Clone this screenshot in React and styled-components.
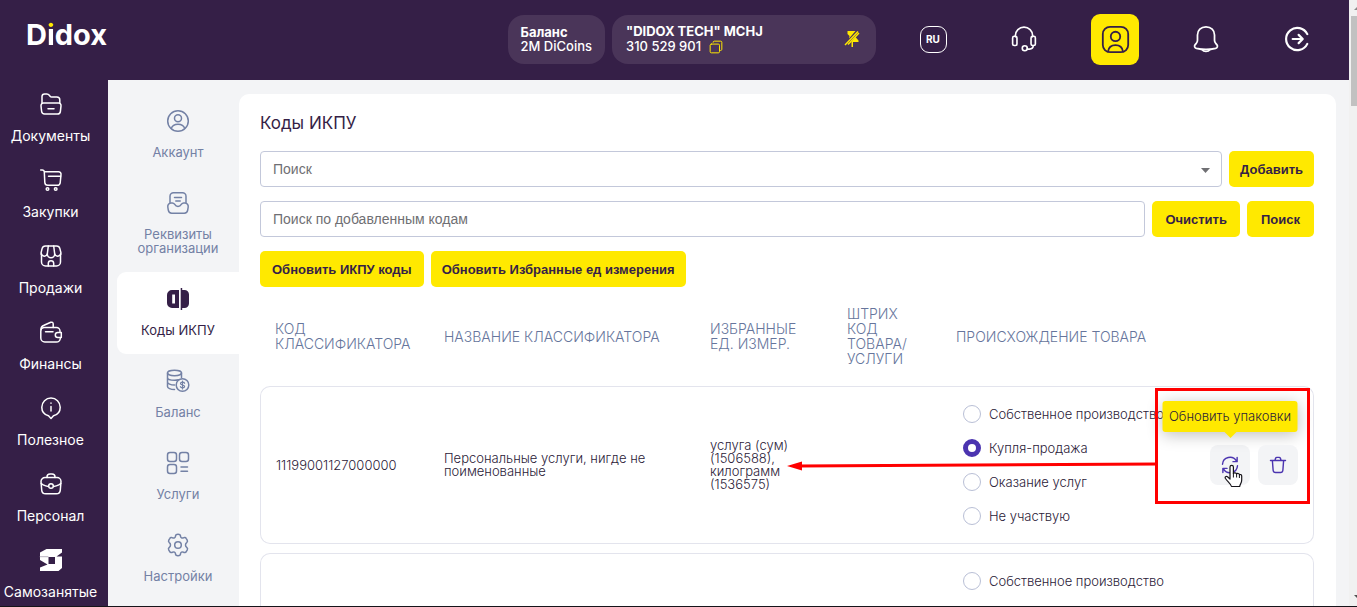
import { useState } from "react";
import styled, { createGlobalStyle, css } from "styled-components";

const GlobalStyle = createGlobalStyle`
  * {
    box-sizing: border-box;
  }
  body {
    margin: 0;
    font-family: Inter, "Liberation Sans", sans-serif;
    color: #351f47;
    overflow: hidden;
  }
  button, input, select {
    font-family: inherit;
  }
`;

const Screen = styled.div`
  height: 100vh;
  display: flex;
  flex-direction: column;
`;

const Viewport = styled.div`
  flex: 1;
  min-height: 0;
  display: flex;
`;

const BottomEdge = styled.div`
  height: 1px;
  flex-shrink: 0;
  background-color: #16141a;
`;

const Page = styled.div`
  flex: 1;
  min-width: 0;
  display: flex;
  flex-direction: column;
  background-color: #f3f4f6;
`;

const Scrollbar = styled.div`
  width: 8px;
  flex-shrink: 0;
  display: flex;
  flex-direction: column;
  align-items: flex-end;
  background-color: #f1f1f1;
  overflow: hidden;
`;

const ScrollArrow = styled.svg`
  width: 3px;
  height: 16px;
  flex-shrink: 0;
`;

const Thumb = styled.div`
  width: 6px;
  height: 90px;
  margin-bottom: auto;
  background-color: #c1c1c1;
`;

const Header = styled.header`
  height: 80px;
  flex-shrink: 0;
  display: flex;
  align-items: center;
  padding: 0 28px 2px 26px;
  background-color: #351f47;
  color: white;
`;

const Logo = styled.a`
  margin: 0 auto 8px 0;
  font-size: 29px;
  line-height: 30px;
  font-weight: 700;
  color: white;
  text-decoration: none;
`;

const LogoDot = styled.span`
  background: linear-gradient(#ffe900 32%, white 32%);
  background-clip: text;
  color: transparent;
`;

const HeaderCard = styled.div`
  height: 49px;
  display: flex;
  align-items: center;
  justify-content: space-between;
  padding: 0 13px;
  margin-right: 7px;
  border-radius: 16px;
  background-color: #4a3559;
  font-size: 13px;
  line-height: 14px;
  ${(p) => p.$wide && css`
    width: 264px;
    margin-right: 33px;
    padding: 0 16px 0 14px;
    line-height: 15px;
  `}
`;

const CardNumber = styled.div`
  display: flex;
  align-items: center;
  gap: 8px;
  font-weight: 500;
`;

const PlainButton = styled.button`
  display: flex;
  padding: 0;
  border: none;
  background: none;
  color: #ffe900;
  cursor: pointer;
`;

const HeaderActions = styled.div`
  display: flex;
  gap: 43px;
`;

const HeaderButton = styled.button`
  width: 48px;
  height: 51px;
  display: flex;
  align-items: center;
  justify-content: center;
  padding: 0;
  border: none;
  border-radius: 9px;
  background-color: ${(p) => (p.$active ? "#ffe900" : "transparent")};
  color: ${(p) => (p.$active ? "#351f47" : "white")};
  cursor: pointer;
`;

const Lang = styled.span`
  width: 27px;
  height: 27px;
  display: flex;
  align-items: center;
  justify-content: center;
  border: 1px solid white;
  border-radius: 9px;
  font-size: 10px;
  font-weight: 700;
`;

const Body = styled.div`
  flex: 1;
  min-height: 0;
  display: flex;
  overflow: hidden;
`;

const Sidebar = styled.nav`
  width: 108px;
  flex-shrink: 0;
  background-color: #351f47;
`;

const SideLink = styled.a`
  height: 76px;
  display: flex;
  flex-direction: column;
  align-items: center;
  gap: 11px;
  padding: 12px 7px 0 0;
  font-size: 14px;
  line-height: 18px;
  color: white;
  text-decoration: none;
`;

const SubNav = styled.nav`
  width: 131px;
  flex-shrink: 0;
  padding: 14px 0 0 9px;
`;

const SubLink = styled.a`
  display: flex;
  flex-direction: column;
  align-items: center;
  gap: 12px;
  padding: 15px 0 17px;
  border-radius: 9px 0 0 9px;
  font-size: 13px;
  line-height: 14px;
  text-align: center;
  text-decoration: none;
  color: ${(p) => (p.$active ? "#351f47" : "#7381a5")};
  background-color: ${(p) => (p.$active ? "white" : "transparent")};
`;

const Main = styled.main`
  flex: 1;
  min-width: 0;
  margin: 14px 13px 0 0;
  padding: 17px 22px 0 21px;
  border-radius: 10px 10px 0 0;
  background-color: white;
`;

const Title = styled.h1`
  margin: 0 0 16px;
  font-size: 17px;
  line-height: 24px;
  font-weight: 400;
`;

const Toolbar = styled.div`
  display: flex;
  gap: 7px;
  margin-bottom: ${(p) => (p.$last ? "0" : "14px")};
`;

const field = css`
  width: 100%;
  height: 36px;
  padding: 0 12px;
  border: 1px solid #c3c8da;
  border-radius: 4px;
  background-color: white;
  font-family: "Liberation Sans", Arial, sans-serif;
  font-size: 14px;
  color: #6f6f73;
  outline: none;
`;

const SelectBox = styled.div`
  position: relative;
  flex: 1;
`;

const Select = styled.select`
  ${field}
  appearance: none;
`;

const Caret = styled.svg`
  position: absolute;
  right: 12px;
  top: 17px;
  width: 9px;
  height: 5px;
  pointer-events: none;
`;

const Input = styled.input`
  ${field}
  flex: 1;
  min-width: 0;
  &::placeholder {
    color: #6f6f73;
    opacity: 1;
  }
`;

const Button = styled.button`
  height: 36px;
  padding: 0 ${(p) => p.$pad || 12}px;
  border: none;
  border-radius: 5px;
  background-color: #ffe900;
  font-family: "Liberation Sans", Arial, sans-serif;
  font-size: 13px;
  font-weight: 700;
  color: #351f47;
  white-space: nowrap;
  cursor: pointer;
`;

const Table = styled.table`
  width: 100%;
  table-layout: fixed;
  border-collapse: separate;
  border-spacing: 0 9px;
`;

const Col = styled.col`
  width: ${(p) => p.$w};
`;

const Th = styled.th`
  padding: 10px 15px 11px;
  font-size: 14px;
  line-height: 15px;
  font-weight: 300;
  text-align: left;
  text-transform: uppercase;
  color: #66759c;
`;

const Td = styled.td`
  position: relative;
  padding: 10px 15px;
  border: solid #e3e4ed;
  border-width: 1px 0;
  font-size: 13px;
  line-height: 13px;
  font-weight: 300;
  color: #2b2138;
  &:first-child {
    border-left-width: 1px;
    border-radius: 10px 0 0 10px;
  }
  &:last-child {
    border-right-width: 1px;
    border-radius: 0 10px 10px 0;
  }
`;

const Options = styled.div`
  display: flex;
  flex-direction: column;
  padding-left: 7px;
`;

const Option = styled.label`
  height: 34px;
  display: flex;
  align-items: center;
  gap: 8px;
  white-space: nowrap;
`;

const Radio = styled.input`
  appearance: none;
  width: 18px;
  height: 18px;
  margin: 0;
  flex-shrink: 0;
  border: 1px solid #b9bfd6;
  border-radius: 50%;
  background-color: white;
  &:checked {
    border: 5px solid #4b34b0;
  }
`;

const RowActions = styled.div`
  display: flex;
  justify-content: flex-end;
  gap: 8px;
`;

const IconButton = styled.button`
  position: relative;
  width: 40px;
  height: 40px;
  display: flex;
  align-items: center;
  justify-content: center;
  padding: 0;
  border: none;
  border-radius: 8px;
  background-color: #f3f4f6;
  color: #4b34b0;
  cursor: pointer;
`;

const Tooltip = styled.span`
  position: absolute;
  left: 50%;
  bottom: 53px;
  transform: translateX(-50%);
  width: 135px;
  padding: 8px 0 9px;
  border-radius: 3px;
  background-color: #ffe900;
  box-shadow: 0 3px 16px rgba(0, 0, 0, 0.25);
  font-size: 13px;
  line-height: 14px;
  font-weight: 300;
  text-align: center;
  white-space: nowrap;
  color: #2b2138;
  &::after {
    content: "";
    position: absolute;
    left: 50%;
    top: 100%;
    transform: translateX(-50%);
    border: 6px solid transparent;
    border-top-color: #ffe900;
    border-bottom: none;
  }
`;

const Hand = styled.svg`
  position: absolute;
  left: 14px;
  top: 19px;
  width: 19px;
  height: 24px;
  z-index: 1;
`;

const Highlight = styled.div`
  position: absolute;
  right: 3px;
  top: 1px;
  width: 155px;
  height: 116px;
  border: 3px solid #ff0000;
  pointer-events: none;
`;

const Arrow = styled.svg`
  position: absolute;
  right: 155px;
  top: 70px;
  width: 371px;
  height: 14px;
  pointer-events: none;
`;

const Icon = ({ size = 24, width = 1.5, children }) => (
  <svg
    width={size}
    height={size}
    viewBox="0 0 24 24"
    fill="none"
    stroke="currentColor"
    strokeWidth={width}
    strokeLinecap="round"
    strokeLinejoin="round"
    aria-hidden="true"
  >
    {children}
  </svg>
);

const sideItems = [
  {
    label: "Документы",
    icon: (
      <>
        <path d="M3 11V4.6A2.6 2.6 0 0 1 5.6 2h2.2c1.1 0 1.9.4 2.5 1.2l1 1.3c.3.4.7.5 1.2.5h5.3a3 3 0 0 1 3 3v3" />
        <path d="M5 11h14.500a2.500 2.500 0 0 1 2.500 2.800l-.6 5.500A3 3 0 0 1 18.400 22H5.600a3 3 0 0 1-3-2.700L2 13.800A2.600 2.600 0 0 1 4.500 11z" />
        <path d="M9 16.700h6" />
      </>
    ),
  },
  {
    label: "Закупки",
    icon: (
      <>
        <path d="M1.700 2h1.500c1.300 0 2 .8 2.100 2l.5 10.500A3 3 0 0 0 8.800 17.300h9.400a3 3 0 0 0 3-2.500l.8-8.200A2.500 2.500 0 0 0 19.500 3.700H5.200" />
        <path d="M9.500 8.200H21.500" />
        <circle cx="8.500" cy="21" r="1.300" />
        <circle cx="16.700" cy="21" r="1.300" />
      </>
    ),
  },
  {
    label: "Продажи",
    icon: (
      <>
        <path d="M2.500 10V18a4 4 0 0 0 4 4h11a4 4 0 0 0 4-4v-8" />
        <path d="M6.500 2h11a3.500 3.500 0 0 1 3.400 2.600l1 4a3.200 3.200 0 0 1-6.200 1.400 3.700 3.700 0 0 1-7.400 0 3.200 3.200 0 0 1-6.200-1.400l1-4A3.500 3.500 0 0 1 6.500 2z" />
        <path d="M8.300 10L9.300 2M15.700 10l-1-8M9.300 22v-2.500a2.700 2.700 0 0 1 5.400 0V22" />
      </>
    ),
  },
  {
    label: "Финансы",
    icon: (
      <>
        <path d="M21 11.500V11a3.500 3.500 0 0 0-3.500-3.500H5A3.500 3.500 0 0 0 1.800 11v7A4 4 0 0 0 5.800 22h11.500a4 4 0 0 0 4-3.500" />
        <path d="M2 9.500c0-2 .8-3.300 2.500-4l7.300-3.200a1.700 1.700 0 0 1 2.400 1.600v3.500" />
        <path d="M22.300 12.500v5h-3.500a2.500 2.500 0 0 1 0-5zM6.500 11.800h7.500" />
      </>
    ),
  },
  {
    label: "Полезное",
    icon: (
      <>
        <path d="M12 22.500l-2.500-2.700C5.300 18.600 2.800 15.500 2.800 11.200a9.200 9.200 0 0 1 18.400 0c0 4.300-2.500 7.400-6.700 8.600z" />
        <path d="M12 10.500v4.500M12 7v.3" />
      </>
    ),
  },
  {
    label: "Персонал",
    icon: (
      <>
        <path d="M8 5.500V5a3 3 0 0 1 3-3h2a3 3 0 0 1 3 3v.5" />
        <path d="M6 5.500h12a4 4 0 0 1 4 4l-.7 8.500a4 4 0 0 1-4 3.800H6.700a4 4 0 0 1-4-3.800L2 9.500a4 4 0 0 1 4-4z" />
        <path d="M2.200 11.500l2 1.400c1.600.9 3.400 1.400 5.200 1.500M21.800 11.500l-2 1.400c-1.600.9-3.400 1.400-5.200 1.500" />
        <circle cx="12" cy="14" r="2.300" />
      </>
    ),
  },
  {
    label: "Самозанятые",
    icon: (
      <>
        <path
          fillRule="evenodd"
          d="M7.500 1H23v3.500l-5.500 4H23V20l-3.500 3H1v-3.500l7.500-3L1 12V4.500zM9.500 9v7H16V9z"
          fill="currentColor"
          stroke="none"
        />
        <path d="M1 8.700h8" stroke="#9a8fa3" strokeWidth="0.700" />
      </>
    ),
  },
];

const subItems = [
  {
    label: "Аккаунт",
    icon: (
      <>
        <circle cx="12" cy="12" r="10.300" />
        <circle cx="12" cy="9.300" r="3.500" />
        <path d="M5.300 19.500c.8-2.600 3.400-4.200 6.700-4.200s5.900 1.600 6.700 4.200" />
      </>
    ),
  },
  {
    label: "Реквизиты организации",
    icon: (
      <>
        <path d="M4 11.500V5.300A3.500 3.500 0 0 1 7.500 1.800h9A3.500 3.500 0 0 1 20 5.300v6.200M8.500 6.500h7M9.800 10h4.400" />
        <path d="M5 12h1.300c1 0 1.700.4 2.200 1.200.8 1.300 2 2.300 3.500 2.300s2.700-1 3.500-2.300c.5-.8 1.200-1.200 2.200-1.200H19a3.500 3.500 0 0 1 3.200 4l-.5 3.200a3.500 3.500 0 0 1-3.500 3H5.800a3.500 3.500 0 0 1-3.500-3L1.800 16A3.500 3.500 0 0 1 5 12z" />
      </>
    ),
  },
  {
    label: "Коды ИКПУ",
    active: true,
    icon: (
      <g stroke="none" fill="currentColor">
        <path
          fillRule="evenodd"
          d="M6 3h7v18H6a5 5 0 0 1-5-5V8a5 5 0 0 1 5-5zm.2 4.500v9H9v-9z"
        />
        <path d="M14.700 1h1.500v2h2.300A4.500 4.500 0 0 1 23 7.500v9a4.500 4.500 0 0 1-4.500 4.500H16.200v2h-1.500z" />
      </g>
    ),
  },
  {
    label: "Баланс",
    icon: (
      <>
        <ellipse cx="8.500" cy="4" rx="7" ry="2.700" />
        <path d="M1.500 4v13.500c0 1.600 3 3 7 3M15.500 4v4.500M1.500 8.500c0 1.600 3.100 2.800 7 2.800 1.500 0 2.800-.2 4-.5M1.500 13c0 1.600 3 3 7 3" />
        <circle cx="16.500" cy="16" r="6.300" />
        <path d="M18.600 14.300c-.3-.8-1-1.100-2.100-1.100-1.200 0-2 .5-2 1.400 0 2 4.100.8 4.100 2.900 0 .9-.8 1.400-2.100 1.400-1.100 0-1.900-.4-2.100-1.200M16.500 12v8" strokeWidth="1.200" />
      </>
    ),
  },
  {
    label: "Услуги",
    icon: (
      <>
        <rect x="1.500" y="1.500" width="9" height="9" rx="2.500" />
        <rect x="13.500" y="1.500" width="9" height="9" rx="2.500" />
        <rect x="1.500" y="13.500" width="9" height="9" rx="2.500" />
        <path d="M15 16h6.500M15 20.300h6.500" />
      </>
    ),
  },
  {
    label: "Настройки",
    icon: (
      <>
        <path d="M9.500 3.200a2.500 2 0 0 1 5 0c.1 1.500 1.600 2.300 2.900 1.600a2 2 0 0 1 2.900.8l.9 1.500a2 2 0 0 1-.5 2.500 3 3 0 0 0 0 4.800 2 2 0 0 1 .6 2.500l-.9 1.500a2 2 0 0 1-3 .8c-1.300-.7-2.800.1-2.900 1.600a2.500 2 0 0 1-5 0c-.1-1.500-1.600-2.300-2.900-1.600a2 2 0 0 1-3-.8l-.9-1.500a2 2 0 0 1 .6-2.500 3 3 0 0 0 0-4.800 2 2 0 0 1-.5-2.500l.9-1.500a2 2 0 0 1 2.900-.8c1.300.7 2.800-.1 2.900-1.600z" />
        <circle cx="12" cy="12" r="3.300" />
      </>
    ),
  },
];

const origins = [
  "Собственное производство",
  "Купля-продажа",
  "Оказание услуг",
  "Не участвую",
];

const columns = [
  { title: "Код классификатора", width: "169px" },
  { title: "Название классификатора", width: "auto" },
  { title: "Избранные ед. измер.", width: "137px" },
  { title: "Штрих код товара/ услуги", width: "109px" },
  { title: "Происхождение товара", width: "232px" },
  { title: "", width: "141px" },
];

const products = [
  {
    id: 1,
    code: "11199001127000000",
    name: "Персональные услуги, нигде не поименованные",
    units: "услуга (сум) (1506588), килограмм (1536575)",
    origin: "Купля-продажа",
    hovered: true,
  },
  { id: 2, code: "", name: "", units: "", origin: "" },
];

const ProductRow = ({ product }) => {
  const [origin, setOrigin] = useState(product.origin);

  return (
    <tr>
      <Td>{product.code}</Td>
      <Td>{product.name}</Td>
      <Td>{product.units}</Td>
      <Td />
      <Td>
        <Options>
          {origins.map((item) => (
            <Option key={item}>
              <Radio
                type="radio"
                name={`origin-${product.id}`}
                checked={origin === item}
                onChange={() => setOrigin(item)}
              />
              {item}
            </Option>
          ))}
        </Options>
      </Td>
      <Td>
        <RowActions>
          <IconButton aria-label="Обновить упаковки">
            <Icon size={18} width={1.9}>
              <path d="M2 11a10 10 0 0 1 18.500-4.500M21.500 2v5.500H16M22 13a10 10 0 0 1-18.500 4.500M2.500 22v-5.500H8" />
            </Icon>
            {product.hovered && (
              <>
                <Tooltip role="tooltip">Обновить упаковки</Tooltip>
                <Hand viewBox="0 0 19 24">
                  <path
                    d="M6 15V3a1.700 1.700 0 0 1 3.400 0v6.500c.3-1 3-1 3.200.5.500-.9 2.700-.7 2.800.8.700-.6 2.300-.3 2.300 1.200v4c0 3-1.700 4-2 6.500H7.500C7 20 3.500 17.500 1.500 14.500c-1-1.600.7-2.800 2-1.700z"
                    fill="white"
                    stroke="#16141a"
                    strokeWidth="1.200"
                    strokeLinejoin="round"
                  />
                  <path d="M9.400 9v4.500M12.600 10v3.500M15.400 11v3" stroke="#16141a" fill="none" />
                </Hand>
              </>
            )}
          </IconButton>
          <IconButton aria-label="Удалить">
            <Icon size={18} width={1.9}>
              <path d="M2 6h20M8 5.500l.8-2.500c.3-.8.900-1.200 1.700-1.200h3c.8 0 1.400.4 1.700 1.200l.8 2.500M4.500 6l1 13c.2 2 1.300 3 3.200 3h6.600c1.900 0 3-1 3.200-3l1-13" />
            </Icon>
          </IconButton>
        </RowActions>
        {product.hovered && (
          <>
            <Highlight />
            <Arrow viewBox="0 0 371 14">
              <path d="M12 9L371 7" stroke="#ff0000" strokeWidth="3" />
              <path d="M0 9L15 4.500v9z" fill="#ff0000" />
            </Arrow>
          </>
        )}
      </Td>
    </tr>
  );
};

const App = () => {
  return (
    <Screen>
      <GlobalStyle />
      <Viewport>
        <Page>
          <Header>
            <Logo href="#">
              D<LogoDot>i</LogoDot>dox
            </Logo>
            <HeaderCard>
              <div>
                <b>Баланс</b>
                <CardNumber>2M DiCoins</CardNumber>
              </div>
            </HeaderCard>
            <HeaderCard $wide>
              <div>
                <b>"DIDOX TECH" MCHJ</b>
                <CardNumber>
                  310 529 901
                  <PlainButton aria-label="Скопировать">
                    <Icon size={14} width={1.7}>
                      <path d="M4 7h12a2 2 0 0 1 2 2v11a2 2 0 0 1-2 2H4a2 2 0 0 1-2-2V9a2 2 0 0 1 2-2z" />
                      <path d="M7 4a2 2 0 0 1 2-2h11a2 2 0 0 1 2 2v12a2 2 0 0 1-2 2" />
                    </Icon>
                  </PlainButton>
                </CardNumber>
              </div>
              <PlainButton aria-label="Открепить">
                <svg width="16" height="18" viewBox="0 0 16 18" fill="currentColor">
                  <path d="M3.500 1h8L5 8.500 5.500 6 3.500 4zM11.500 7l3 3.500V12H9v5H7.500v-5z" />
                  <path d="M1 15L14 1.500M4 14.500L15 3" stroke="currentColor" strokeWidth="1.400" />
                </svg>
              </PlainButton>
            </HeaderCard>
            <HeaderActions>
              <HeaderButton>
                <Lang>RU</Lang>
              </HeaderButton>
              <HeaderButton aria-label="Поддержка">
                <Icon size={26}>
                  <path d="M4 10V9a8 8 0 0 1 16 0v1" />
                  <rect x="1.500" y="9.500" width="4" height="8.500" rx="1.500" />
                  <rect x="18.500" y="9.500" width="4" height="8.500" rx="1.500" />
                  <path d="M20.500 18c0 2.200-1.500 3.300-3.500 3.300h-2" />
                  <circle cx="12.700" cy="20.500" r="2.300" />
                </Icon>
              </HeaderButton>
              <HeaderButton $active aria-label="Профиль">
                <Icon size={29}>
                  <rect x="1.500" y="1.500" width="21" height="21" rx="6" />
                  <circle cx="12" cy="9.500" r="3.900" />
                  <path d="M5.800 22c.5-3.500 2.800-5.300 6.200-5.300s5.700 1.800 6.200 5.300" />
                </Icon>
              </HeaderButton>
              <HeaderButton aria-label="Уведомления">
                <Icon size={28} width={1.5}>
                  <path d="M12 1.500c-4.400 0-7.300 3-7.300 7v4.500c0 1-.3 1.700-.9 2.500L2.600 17c-.9 1.300-.3 2.600 1.200 3 5.400 1.300 11 1.300 16.400 0 1.500-.4 2.100-1.700 1.200-3l-1.200-1.500c-.6-.8-.9-1.500-.9-2.500V8.500c0-4-2.900-7-7.300-7z" />
                  <path d="M8.500 21c.8 1.100 2 1.700 3.500 1.700s2.700-.6 3.500-1.700" />
                </Icon>
              </HeaderButton>
              <HeaderButton aria-label="Выйти">
                <Icon size={26} width={2}>
                  <path d="M21.500 7.500A10.300 10.300 0 1 0 21.500 16.500" />
                  <path d="M8 12h9M13.500 8.200l3.800 3.800-3.800 3.800" />
                </Icon>
              </HeaderButton>
            </HeaderActions>
          </Header>
          <Body>
            <Sidebar>
              {sideItems.map((item) => (
                <SideLink href="#" key={item.label}>
                  <Icon>{item.icon}</Icon>
                  {item.label}
                </SideLink>
              ))}
            </Sidebar>
            <SubNav>
              {subItems.map((item) => (
                <SubLink href="#" key={item.label} $active={item.active}>
                  <Icon>{item.icon}</Icon>
                  {item.label}
                </SubLink>
              ))}
            </SubNav>
            <Main>
              <Title>Коды ИКПУ</Title>
              <Toolbar>
                <SelectBox>
                  <Select aria-label="Поиск кода">
                    <option>Поиск</option>
                  </Select>
                  <Caret viewBox="0 0 9 5">
                    <path d="M0 0h9L4.500 5z" fill="#6f6f73" />
                  </Caret>
                </SelectBox>
                <Button $pad={11}>Добавить</Button>
              </Toolbar>
              <Toolbar>
                <Input
                  aria-label="Поиск по добавленным кодам"
                  placeholder="Поиск по добавленным кодам"
                />
                <Button $pad={13}>Очистить</Button>
                <Button $pad={14}>Поиск</Button>
              </Toolbar>
              <Toolbar $last>
                <Button>Обновить ИКПУ коды</Button>
                <Button $pad={11}>Обновить Избранные ед измерения</Button>
              </Toolbar>
              <Table>
                <colgroup>
                  {columns.map((column) => (
                    <Col key={column.title} $w={column.width} />
                  ))}
                </colgroup>
                <thead>
                  <tr>
                    {columns.map((column) => (
                      <Th key={column.title}>{column.title}</Th>
                    ))}
                  </tr>
                </thead>
                <tbody>
                  {products.map((product) => (
                    <ProductRow key={product.id} product={product} />
                  ))}
                </tbody>
              </Table>
            </Main>
          </Body>
        </Page>
        <Scrollbar aria-hidden="true">
          <ScrollArrow viewBox="0 0 3 16">
            <path d="M0 10l3-3v3z" fill="#8b8b8b" />
          </ScrollArrow>
          <Thumb />
          <ScrollArrow viewBox="0 0 3 16">
            <path d="M0 5h3v3z" fill="#505050" />
          </ScrollArrow>
        </Scrollbar>
      </Viewport>
      <BottomEdge />
    </Screen>
  );
};

export default App;
